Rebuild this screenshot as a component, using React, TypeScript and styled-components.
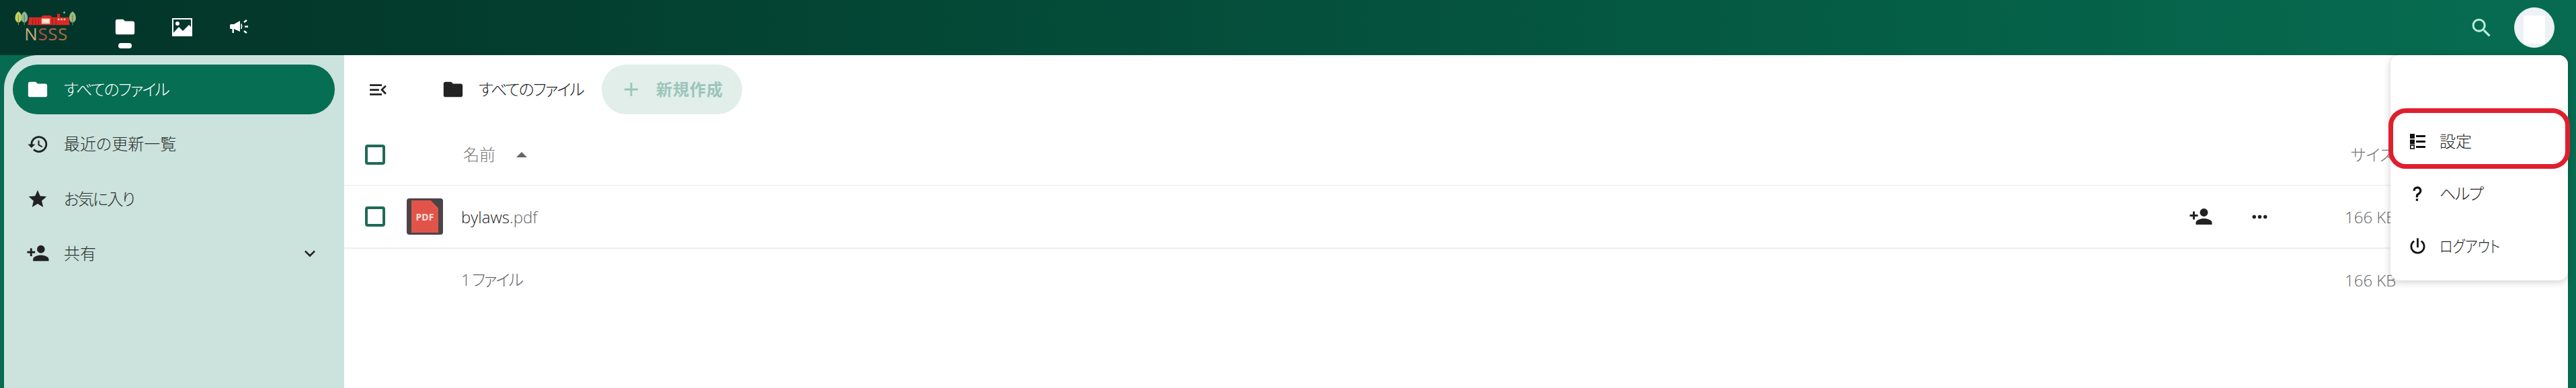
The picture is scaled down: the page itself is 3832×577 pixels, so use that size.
import React from 'react';
import styled, { createGlobalStyle } from 'styled-components';

const GlobalStyle = createGlobalStyle`
  html, body {
    margin: 0;
    padding: 0;
    height: 100%;
    overflow: hidden;
    background: #066b50;
  }
  #root {
    height: 100%;
  }
  * {
    box-sizing: border-box;
  }
`;

const ICONS = {
  folder: 'M10,4H4C2.89,4 2,4.89 2,6V18A2,2 0 0,0 4,20H20A2,2 0 0,0 22,18V8C22,6.89 21.1,6 20,6H12L10,4Z',
  history:
    'M13.5,8H12V13L16.28,15.54L17,14.33L13.5,12.25V8M13,3A9,9 0 0,0 4,12H1L4.96,16.03L9,12H6A7,7 0 0,1 13,5A7,7 0 0,1 20,12A7,7 0 0,1 13,19C11.07,19 9.32,18.21 8.06,16.94L6.64,18.36C8.27,20 10.5,21 13,21A9,9 0 0,0 22,12A9,9 0 0,0 13,3',
  star: 'M12,17.27L18.18,21L16.54,13.97L22,9.24L14.81,8.62L12,2L9.19,8.62L2,9.24L7.45,13.97L5.82,21L12,17.27Z',
  share:
    'M15,14C12.33,14 7,15.33 7,18V20H23V18C23,15.33 17.67,14 15,14M6,10V7H4V10H1V12H4V15H6V12H9V10M15,12A4,4 0 0,0 19,8A4,4 0 0,0 15,4A4,4 0 0,0 11,8A4,4 0 0,0 15,12Z',
  chevron: 'M7.41,8.58L12,13.17L16.59,8.58L18,10L12,16L6,10L7.41,8.58Z',
  dots: 'M16,12A2,2 0 0,1 18,10A2,2 0 0,1 20,12A2,2 0 0,1 18,14A2,2 0 0,1 16,12M10,12A2,2 0 0,1 12,10A2,2 0 0,1 14,12A2,2 0 0,1 12,14A2,2 0 0,1 10,12M4,12A2,2 0 0,1 6,10A2,2 0 0,1 8,12A2,2 0 0,1 6,14A2,2 0 0,1 4,12Z',
  search:
    'M9.5,3A6.5,6.5 0 0,1 16,9.5C16,11.11 15.41,12.59 14.44,13.73L14.71,14H15.5L20.5,19L19,20.5L14,15.5V14.71L13.73,14.44C12.59,15.41 11.11,16 9.5,16A6.5,6.5 0 0,1 3,9.5A6.5,6.5 0 0,1 9.5,3M9.5,5C7,5 5,7 5,9.5C5,12 7,14 9.5,14C12,14 14,12 14,9.5C14,7 12,5 9.5,5Z',
  power:
    'M16.56,5.44L15.11,6.89C16.84,7.94 18,9.83 18,12A6,6 0 0,1 12,18A6,6 0 0,1 6,12C6,9.83 7.16,7.94 8.88,6.88L7.44,5.44C5.36,6.88 4,9.28 4,12A8,8 0 0,0 12,20A8,8 0 0,0 20,12C20,9.28 18.64,6.88 16.56,5.44M13,3H11V13H13',
  help: 'M10,19H13V22H10V19M12,2C17.35,2.22 19.68,7.62 16.5,11.67C15.67,12.67 14.33,13.33 13.67,14.17C13,15 13,16 13,17H10C10,15.33 10,13.92 10.67,12.92C11.33,11.92 12.67,11.33 13.5,10.67C15.92,8.43 15.32,5.26 12,5A3,3 0 0,0 9,8H6A6,6 0 0,1 12,2Z',
  menuOpen:
    'M21,15.61L19.59,17L14.58,12L19.59,7L21,8.39L17.44,12L21,15.61M3,6H16V8H3V6M3,13V11H13V13H3M3,18V16H16V18H3Z',
  plus: 'M19,13H13V19H11V13H5V11H11V5H13V11H19V13Z',
};

function Icon({ name, size, color }: { name: keyof typeof ICONS; size: number; color: string }) {
  return (
    <svg width={size} height={size} viewBox="0 0 24 24" style={{ flexShrink: 0 }}>
      <path d={ICONS[name]} fill={color} />
    </svg>
  );
}

function PhotosIcon() {
  return (
    <svg width="30" height="27" viewBox="0 0 30 27">
      <rect x="1" y="1" width="28" height="25" fill="none" stroke="#fff" strokeWidth="2" />
      <circle cx="8" cy="8" r="3" fill="#fff" />
      <path d="M1 26 L1 23 L10 13 L16 19 L25 10 L29 14 L29 26 Z" fill="#fff" />
    </svg>
  );
}

function AnnouncementIcon() {
  return (
    <svg width="28" height="24" viewBox="0 0 28 24">
      <path d="M1 9.5 Q1 8 3 8 H7 L16 3 V19 L7 15 V21 H4.5 V15 H3 Q1 15 1 13.5 Z" fill="#fff" />
      <path d="M18 7.5 Q20 11 18 15 Z" fill="#fff" stroke="#fff" strokeWidth="1" />
      <path d="M22 5 L26 2 M23 11.5 H28 M22 18 L26 21" stroke="#fff" strokeWidth="2.4" fill="none" />
    </svg>
  );
}

function SettingsListIcon() {
  return (
    <svg width="24" height="24" viewBox="0 0 24 24">
      <rect x="1" y="1" width="7" height="7" fill="#111" />
      <rect x="1" y="9.5" width="7" height="7" fill="#111" />
      <rect x="1.8" y="18" width="5.4" height="5" fill="#fff" stroke="#111" strokeWidth="1.6" />
      <rect x="10" y="3" width="14" height="3" fill="#111" />
      <rect x="10" y="11" width="14" height="3" fill="#111" />
      <rect x="10" y="19" width="14" height="3" fill="#111" />
    </svg>
  );
}

function TreeShape({ x, color, vein }: { x: number; color: string; vein: string }) {
  return (
    <g>
      <path d={`M${x} 1 C${x + 7} 5 ${x + 8} 18 ${x} 20 C${x - 8} 18 ${x - 7} 5 ${x} 1 Z`} fill={color} />
      <path d={`M${x} 7 V24`} stroke={vein} strokeWidth="1.4" />
    </g>
  );
}

function Logo() {
  return (
    <LogoBox>
      <svg width="104" height="26" viewBox="0 0 104 26">
        <TreeShape x={5} color="#c3d35c" vein="#8b8f45" />
        <TreeShape x={15} color="#8db596" vein="#6e7f5c" />
        <TreeShape x={96} color="#9bbb7e" vein="#6e7f5c" />
        <path d="M21 24 L23 11 H43 L46 8 H59 L62 11 H70 V5 H75 V11 H90 L91 24 Z" fill="#d92a26" />
        <rect x="44" y="13" width="14" height="9" fill="#eed0b4" />
        <rect x="47" y="15" width="9" height="4" fill="#f5efe4" />
        <rect x="71" y="13" width="3" height="3" fill="#f2c6b0" />
        <rect x="76" y="13" width="3" height="3" fill="#f2c6b0" />
        <rect x="81" y="13" width="3" height="3" fill="#f2c6b0" />
        <path d="M29 13 V24 M34 13 V24 M39 13 V24 M62 13 V24 M68 13 V24" stroke="#8d1c1a" strokeWidth="1" />
        <path d="M80 3 H84 M82 1 V5" stroke="#c9c7a4" strokeWidth="1" />
      </svg>
      <LogoText>
        <LogoLetter $color="#c9ae7b">N</LogoLetter>
        <LogoLetter $color="#b4533d">S</LogoLetter>
        <LogoLetter $color="#b5654a">S</LogoLetter>
        <LogoLetter $color="#a97040">S</LogoLetter>
      </LogoText>
    </LogoBox>
  );
}

const NAV_ITEMS = [
  { icon: <Icon name="history" size={33} color="#222" />, label: '最近の更新一覧', tracking: 0 },
  { icon: <Icon name="star" size={32} color="#222" />, label: 'お気に入り', tracking: -2 },
];

function App() {
  return (
    <Page>
      <GlobalStyle />
      <Header>
        <Logo />
        <AppNav>
          <AppTab $active>
            <Icon name="folder" size={34} color="#fff" />
          </AppTab>
          <AppTab>
            <PhotosIcon />
          </AppTab>
          <AppTab>
            <AnnouncementIcon />
          </AppTab>
        </AppNav>
        <HeaderRight>
          <Icon name="search" size={37} color="#b8eedd" />
          <Avatar>
            <AvatarInner />
          </Avatar>
        </HeaderRight>
      </Header>
      <Body>
        <Sidebar>
          <NavItem $active>
            <NavIconSlot>
              <Icon name="folder" size={34} color="#fff" />
            </NavIconSlot>
            <Label $tracking={-2}>すべてのファイル</Label>
          </NavItem>
          {NAV_ITEMS.map((item) => (
            <NavItem key={item.label}>
              <NavIconSlot>{item.icon}</NavIconSlot>
              <Label $tracking={item.tracking}>{item.label}</Label>
            </NavItem>
          ))}
          <NavItem>
            <NavIconSlot>
              <Icon name="share" size={35} color="#222" />
            </NavIconSlot>
            <Label>共有</Label>
            <NavChevron>
              <Icon name="chevron" size={32} color="#222" />
            </NavChevron>
          </NavItem>
        </Sidebar>
        <Main>
          <Toolbar>
            <ToggleButton>
              <Icon name="menuOpen" size={33} color="#222" />
            </ToggleButton>
            <Crumb>
              <Icon name="folder" size={34} color="#222" />
              <Label $tracking={-2}>すべてのファイル</Label>
            </Crumb>
            <NewButton>
              <Icon name="plus" size={34} color="#9cc5b9" />
              <Label $tracking={1}>新規作成</Label>
            </NewButton>
          </Toolbar>
          <HeadRow>
            <Checkbox />
            <HeadName>
              <Label>名前</Label>
              <SortArrow />
            </HeadName>
            <HeadSize>
              <Label>サイズ</Label>
            </HeadSize>
          </HeadRow>
          <FileRow>
            <Checkbox />
            <PdfIcon>
              <PdfSheet>PDF</PdfSheet>
            </PdfIcon>
            <FileName>
              bylaws<FileExt>.pdf</FileExt>
            </FileName>
            <RowActions>
              <Icon name="share" size={36} color="#222" />
              <Icon name="dots" size={33} color="#222" />
            </RowActions>
            <SizeCell>166 KB</SizeCell>
          </FileRow>
          <SummaryRow>
            <SummaryText>
              <Label $tracking={-2}>1 ファイル</Label>
            </SummaryText>
            <SizeCell>166 KB</SizeCell>
          </SummaryRow>
          <UserMenu>
            <MenuItem />
            <MenuItem $highlighted>
              <MenuIconSlot>
                <SettingsListIcon />
              </MenuIconSlot>
              <Label>設定</Label>
            </MenuItem>
            <MenuItem>
              <MenuIconSlot>
                <Icon name="help" size={26} color="#111" />
              </MenuIconSlot>
              <Label $tracking={-1.5}>ヘルプ</Label>
            </MenuItem>
            <MenuItem>
              <MenuIconSlot>
                <Icon name="power" size={33} color="#111" />
              </MenuIconSlot>
              <Label $squeeze={0.84}>ログアウト</Label>
            </MenuItem>
          </UserMenu>
        </Main>
      </Body>
    </Page>
  );
}

export default App;

const FONT = `'Noto Sans CJK JP', 'Open Sans', sans-serif`;
const LATIN_FONT = `'Open Sans', 'Noto Sans CJK JP', sans-serif`;

const Page = styled.div`
  height: 100%;
  display: flex;
  flex-direction: column;
  font-family: ${FONT};
  font-size: 24px;
  font-weight: 300;
  font-feature-settings: 'palt';
  color: #222;
`;

const Label = styled.span<{ $tracking?: number; $squeeze?: number }>`
  display: inline-block;
  padding-bottom: 3px;
  letter-spacing: ${({ $tracking }) => $tracking ?? 0}px;
  white-space: nowrap;
  transform: scaleX(${({ $squeeze }) => $squeeze ?? 1});
  transform-origin: left center;
`;

const Header = styled.header`
  height: 82px;
  flex-shrink: 0;
  display: flex;
  align-items: flex-start;
  padding-left: 17px;
  background: linear-gradient(90deg, #03352a 0%, #03392b 12%, #066b50 96%);
`;

const LogoBox = styled.div`
  width: 104px;
  height: 48px;
  margin-top: 16px;
  display: flex;
  flex-direction: column;
  align-items: center;
`;

const LogoText = styled.div`
  margin-top: -3px;
  padding-right: 1px;
  font-family: 'Open Sans', sans-serif;
  font-size: 26px;
  line-height: 28px;
  font-weight: 400;
  letter-spacing: 0.5px;
`;

const LogoLetter = styled.span<{ $color: string }>`
  color: ${({ $color }) => $color};
`;

const AppNav = styled.nav`
  display: flex;
  margin-left: 23px;
`;

const AppTab = styled.div<{ $active?: boolean }>`
  position: relative;
  width: 84.5px;
  height: 82px;
  display: flex;
  align-items: center;
  justify-content: center;
  padding-bottom: 2px;

  &::after {
    content: '';
    display: ${({ $active }) => ($active ? 'block' : 'none')};
    position: absolute;
    left: 32px;
    bottom: 10px;
    width: 20px;
    height: 8px;
    border-radius: 4px;
    background: #fff;
  }
`;

const HeaderRight = styled.div`
  margin-left: auto;
  height: 82px;
  display: flex;
  align-items: center;
  gap: 30px;
  padding-right: 32px;
`;

const Avatar = styled.div`
  width: 60px;
  height: 60px;
  border-radius: 50%;
  background: #eef1f5;
  border: 1px solid #d8f3ea;
  display: flex;
  justify-content: center;
  align-items: flex-end;
`;

const AvatarInner = styled.div`
  width: 32px;
  height: 42px;
  margin-bottom: 5px;
  background: #fff;
`;

const Body = styled.div`
  flex: 1;
  min-height: 0;
  display: flex;
  padding: 0 12px 0 6px;
`;

const Sidebar = styled.aside`
  width: 506px;
  flex-shrink: 0;
  display: flex;
  flex-direction: column;
  gap: 7.33px;
  padding: 14px 14px 0 13px;
  background: #cce2dc;
  border-top-left-radius: 50px;
`;

const NavItem = styled.div<{ $active?: boolean }>`
  height: 74px;
  display: flex;
  align-items: center;
  padding-left: 20px;
  border-radius: 37px;
  background: ${({ $active }) => ($active ? '#066e53' : 'transparent')};
  color: ${({ $active }) => ($active ? '#fff' : '#2a2f2d')};
`;

const NavIconSlot = styled.span`
  width: 34px;
  display: flex;
  justify-content: center;
  margin-right: 22px;
`;

const NavChevron = styled.span`
  display: flex;
  margin-left: auto;
  padding-right: 21px;
`;

const Main = styled.main`
  position: relative;
  flex: 1;
  min-width: 0;
  background: #fff;
  border-top-right-radius: 14px;
`;

const Toolbar = styled.div`
  height: 102px;
  display: flex;
  align-items: center;
  padding: 0 0 0 34px;
`;

const ToggleButton = styled.span`
  display: flex;
  width: 33px;
`;

const Crumb = styled.div`
  display: flex;
  align-items: center;
  gap: 21px;
  margin-left: 78px;
  color: #222;
`;

const NewButton = styled.div`
  width: 209px;
  height: 74px;
  margin-left: 27px;
  display: flex;
  align-items: center;
  gap: 20px;
  padding-left: 27px;
  border-radius: 37px;
  background: #e1eeea;
  color: #9cc5b9;
  font-weight: 700;
`;

const Checkbox = styled.span`
  width: 30px;
  height: 30px;
  flex-shrink: 0;
  border: 4px solid #1f6a56;
  border-radius: 4px;
`;

const HeadRow = styled.div`
  height: 92px;
  display: flex;
  align-items: center;
  padding: 0 258px 0 31px;
  border-bottom: 1px solid #e8eaea;
`;

const HeadName = styled.div`
  display: flex;
  align-items: center;
  gap: 31px;
  margin-left: 116px;
  color: #777;
`;

const SortArrow = styled.span`
  width: 0;
  height: 0;
  border-left: 8px solid transparent;
  border-right: 8px solid transparent;
  border-bottom: 8px solid #666;
`;

const HeadSize = styled.div`
  margin-left: auto;
  color: #777;
`;

const FileRow = styled.div`
  height: 94px;
  display: flex;
  align-items: center;
  padding: 0 258px 0 31px;
  border-bottom: 2px solid #eceeee;
`;

const PdfIcon = styled.div`
  width: 54px;
  height: 54px;
  margin-left: 32px;
  padding-top: 3px;
  display: flex;
  justify-content: center;
  border-radius: 4px;
  background: #4a4446;
`;

const PdfSheet = styled.div`
  width: 40px;
  height: 48px;
  display: flex;
  align-items: center;
  justify-content: center;
  background: #e2544a;
  clip-path: polygon(0 0, 72% 0, 100% 24%, 100% 100%, 0 100%);
  color: #f8e0dc;
  font-family: ${LATIN_FONT};
  font-size: 14px;
  font-weight: 700;
`;

const FileName = styled.div`
  margin-left: 27px;
  font-family: ${LATIN_FONT};
  color: #222;
`;

const FileExt = styled.span`
  color: #666;
`;

const RowActions = styled.div`
  display: flex;
  align-items: center;
  gap: 53px;
  margin-left: auto;
  margin-right: 110px;
`;

const SizeCell = styled.div`
  width: 74px;
  font-family: ${LATIN_FONT};
  color: #666;
  white-space: nowrap;
  text-align: right;
`;

const SummaryRow = styled.div`
  height: 92px;
  display: flex;
  align-items: center;
  justify-content: space-between;
  padding: 0 258px 0 174px;
`;

const SummaryText = styled.div`
  font-family: ${LATIN_FONT};
  color: #666;
`;

const UserMenu = styled.div`
  position: absolute;
  top: 0;
  right: 0;
  width: 264px;
  height: 335px;
  padding: 11px 0;
  background: #fff;
  border-radius: 14px;
  box-shadow: 0 2px 12px rgba(0, 0, 0, 0.2);
`;

const MenuItem = styled.div<{ $highlighted?: boolean }>`
  position: relative;
  height: 78px;
  display: flex;
  align-items: center;
  padding-left: 26px;
  color: #222;

  &::after {
    content: '';
    display: ${({ $highlighted }) => ($highlighted ? 'block' : 'none')};
    position: absolute;
    top: -10px;
    bottom: -2px;
    left: -3px;
    right: -3px;
    border: 7px solid #e01f2d;
    border-radius: 26px;
  }
`;

const MenuIconSlot = styled.span`
  width: 28px;
  display: flex;
  justify-content: center;
  margin-right: 19px;
`;
